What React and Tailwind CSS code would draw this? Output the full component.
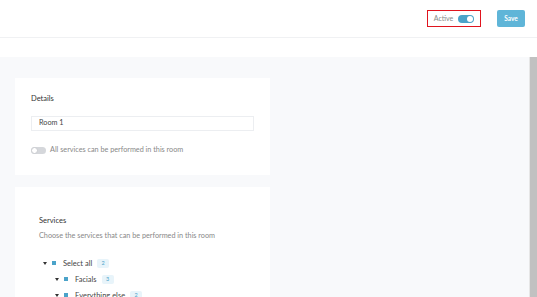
import React from 'react';

const font = { fontFamily: 'Lato, "Open Sans", Arial, sans-serif' };

function Toggle({ on }) {
  return on ? (
    <span className="relative inline-flex h-[8px] w-[16px] items-center rounded-full bg-[#4ba3c9]">
      <span className="absolute right-[1px] h-[6px] w-[6px] rounded-full bg-white"></span>
    </span>
  ) : (
    <span className="relative inline-flex h-[7px] w-[15px] items-center rounded-full bg-[#d5d7db]">
      <span className="absolute left-0 h-[7px] w-[7px] rounded-full border border-[#c9cbcf] bg-white"></span>
    </span>
  );
}

function TreeRow({ label, count, indent }) {
  return (
    <div className={`flex items-center h-[16px] ${indent ? 'pl-[12px]' : ''}`}>
      <span className="flex w-[9px] items-center">
        <svg width="4" height="3" viewBox="0 0 4 3">
          <path d="M0 0 L4 0 L2 3 Z" fill="#333" />
        </svg>
      </span>
      <span className="h-[4px] w-[4px] bg-[#4ba3c9]"></span>
      <span className="ml-[7px] text-[7.5px] text-[#444]">{label}</span>
      <span className="ml-[5px] flex h-[9px] w-[12px] items-center justify-center rounded-[2px] bg-[#e8f4fa] text-[5.5px] text-[#4ba3c9]">{count}</span>
    </div>
  );
}

export default function App() {
  return (
    <div className="flex h-[297px] w-[537px] flex-col overflow-hidden bg-white" style={font}>
      {/* Header */}
      <div className="flex h-[38px] shrink-0 items-center justify-end border-b border-[#f0f1f3] pr-[12px]">
        <div className="flex h-[17px] w-[54px] items-center justify-center gap-[5px] border-[1.5px] border-[#e0141e]">
          <span className="text-[7px] text-[#888]">Active</span>
          <Toggle on />
        </div>
        <button className="ml-[16px] h-[17px] w-[28px] rounded-[2px] bg-[#5fb5d8] text-[6.5px] font-bold text-white">Save</button>
      </div>
      <div className="h-[19px] shrink-0 bg-white"></div>

      <div className="flex flex-1 min-h-0">
        <div className="flex-1 bg-[#f8f9fb] pl-[15px] pt-[21px]">
          <div className="flex flex-col gap-[12px] w-[255px]">
            {/* Details card */}
            <div className="h-[97px] bg-white px-[16px] pt-[15px]">
              <div className="text-[7.5px] text-[#333]">Details</div>
              <div className="mt-[12px] flex h-[15px] items-center border border-[#eceef1] px-[7px] text-[7.25px] text-[#444]">Room 1</div>
              <div className="mt-[14px] flex items-center gap-[4px]">
                <Toggle />
                <span className="text-[7.25px] text-[#888]">All services can be performed in this room</span>
              </div>
            </div>

            {/* Services card */}
            <div className="h-[200px] bg-white px-[24px] pt-[28px]">
              <div className="text-[7.5px] text-[#333]">Services</div>
              <div className="mt-[5px] text-[7.25px] text-[#888]">Choose the services that can be performed in this room</div>
              <div className="mt-[13px] pl-[4px]">
                <TreeRow label="Select all" count="2" />
                <TreeRow label="Facials" count="3" indent />
                <TreeRow label="Everything else" count="2" indent />
              </div>
            </div>
          </div>
        </div>
        <div className="w-[8px] shrink-0 border-l border-[#e6e6e6] bg-[#c1c1c1]"></div>
      </div>
    </div>
  );
}
